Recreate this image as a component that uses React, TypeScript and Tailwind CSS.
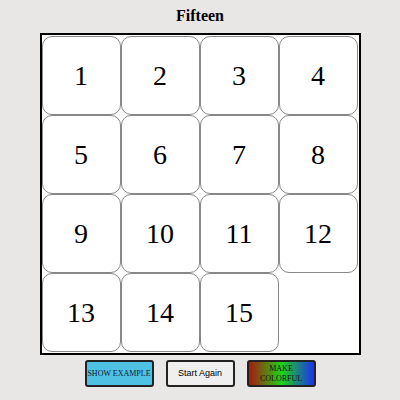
export default function App() {
  const tiles: (number | null)[] = [1, 2, 3, 4, 5, 6, 7, 8, 9, 10, 11, 12, 13, 14, 15, null];
  return (
    <div className="w-[400px] h-[400px] bg-[#e9e6e6] flex flex-col items-center" style={{ fontFamily: '"Liberation Serif", serif' }}>
      <h1 className="text-[16px] font-bold text-black leading-none mt-[8px]">Fifteen</h1>
      <div className="mt-[9px] w-[321px] h-[322px] border-2 border-black bg-white grid grid-cols-[repeat(4,79px)] grid-rows-[repeat(4,79px)] content-start pt-[1px]">
        {tiles.map((t, i) =>
          t === null ? (
            <div key={i} />
          ) : (
            <div
              key={i}
              className="border border-[#888] rounded-[10px] bg-white flex items-center justify-center text-[28px] text-black pt-[1px]"
            >
              {t}
            </div>
          )
        )}
      </div>
      <div className="flex gap-[12px] mt-[5px]">
        <button className="w-[69px] h-[27px] rounded-[3px] border-2 border-[#222] bg-[#4fc1e3] text-[8px] text-[#0a2233] leading-none uppercase" style={{ fontFamily: '"Liberation Serif", serif' }}>
          Show Example
        </button>
        <button className="w-[69px] h-[27px] rounded-[3px] border-2 border-[#222] bg-[#efefef] text-[9px] text-black leading-none" style={{ fontFamily: '"Liberation Sans", Arial, sans-serif' }}>
          Start Again
        </button>
        <button className="w-[69px] h-[27px] rounded-[3px] border-2 border-[#222] bg-[linear-gradient(to_right,#a8180e,#1fd417,#1b30f2)] text-[8px] text-[#111] leading-[10px] uppercase" style={{ fontFamily: '"Liberation Serif", serif' }}>
          Make<br />Colorful
        </button>
      </div>
    </div>
  );
}
